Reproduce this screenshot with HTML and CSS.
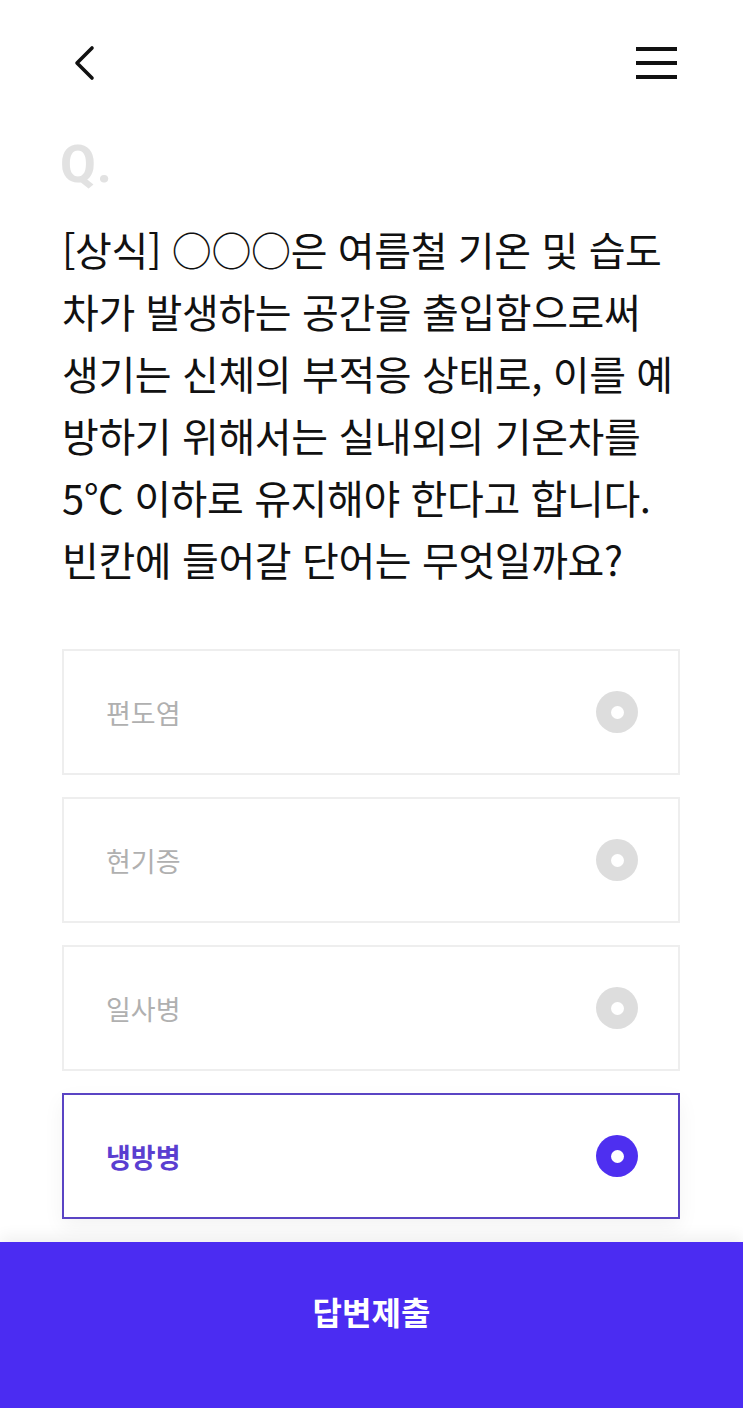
FILE: index.html
```html
<!DOCTYPE html>
<html lang="ko">
<head>
<meta charset="utf-8">
<link rel="stylesheet" href="styles.css">
</head>
<body>
<div class="page">
  <header class="header">
    <svg class="back" width="30" height="40" viewBox="0 0 30 40">
      <polyline points="22,5 7,20 22,35" fill="none" stroke="#111" stroke-width="3.6" stroke-linecap="round" stroke-linejoin="round"/>
    </svg>
    <div class="menu"><span></span><span></span><span></span></div>
  </header>
  <div class="q">Q.</div>
  <p class="question">[상식] ○○○은 여름철 기온 및 습도<br>차가 발생하는 공간을 출입함으로써<br>생기는 신체의 부적응 상태로, 이를 예<br>방하기 위해서는 실내외의 기온차를<br>5℃ 이하로 유지해야 한다고 합니다.<br>빈칸에 들어갈 단어는 무엇일까요?</p>
  <div class="options">
    <div class="option"><span class="label">편도염</span><span class="radio"></span></div>
    <div class="option"><span class="label">현기증</span><span class="radio"></span></div>
    <div class="option"><span class="label">일사병</span><span class="radio"></span></div>
    <div class="option selected"><span class="label">냉방병</span><span class="radio"></span></div>
  </div>
  <div class="submit">답변제출</div>
</div>
</body>
</html>
```
FILE: styles.css
```css
* { box-sizing: border-box; }
html, body { margin: 0; padding: 0; background: #fff; }
body { font-family: "Noto Sans CJK KR", "Noto Sans", sans-serif; color: #111; }
.page { width: 743px; height: 1408px; overflow: hidden; display: flex; flex-direction: column; }
.header { height: 126px; display: flex; align-items: center; justify-content: space-between; padding: 0 66px 0 70px; }
.back { display: block; }
.menu { width: 41px; display: flex; flex-direction: column; gap: 10px; }
.menu span { display: block; height: 4px; background: #111; }
.q { margin: 12px 0 0 60px; height: 54px; font-family: "Roboto", "Noto Sans", sans-serif; font-weight: 700; font-size: 52px; line-height: 54px; color: #e2e2e2; letter-spacing: 1px; }
.question { margin: 26px 0 0 62px; font-size: 40px; line-height: 62px; font-weight: 400; letter-spacing: -0.4px; color: #111; white-space: nowrap; }
.options { margin: 59px 63px 0 62px; display: flex; flex-direction: column; gap: 22px; }
.option { height: 126px; border: 2px solid #eeeeee; display: flex; align-items: center; justify-content: space-between; padding: 0 40px 0 42px; background: #fff; }
.label { font-size: 27px; color: #b0b0b0; letter-spacing: 0; }
.radio { width: 42px; height: 42px; border-radius: 50%; background: #dddddd; display: flex; align-items: center; justify-content: center; }
.radio::after { content: ""; width: 13px; height: 13px; border-radius: 50%; background: #fff; }
.option.selected { border-color: #5a44c4; box-shadow: 0 8px 20px rgba(0,0,0,0.05); }
.option.selected .label { color: #5a3ed0; font-weight: 700; }
.option.selected .radio { background: #4e2ff0; }
.submit { margin-top: 23px; flex: 1; background: #4b2cf2; color: #fff; font-size: 32px; font-weight: 700; display: flex; justify-content: center; padding-top: 47px; box-shadow: 0 -6px 14px rgba(0,0,0,0.06); line-height: 44px; }
```
